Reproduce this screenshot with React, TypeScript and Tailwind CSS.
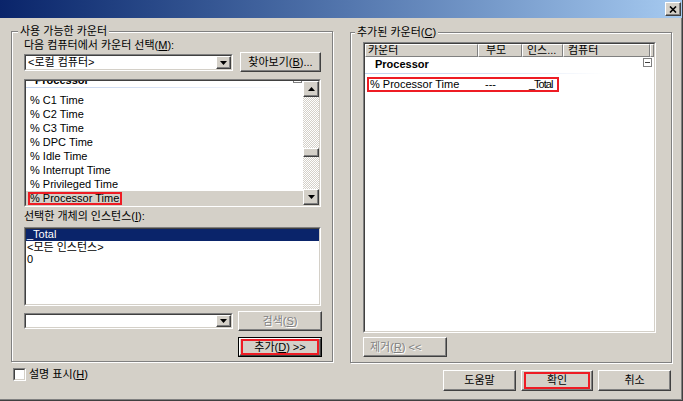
import { FC, ReactNode } from "react";

const raised =
  "border border-t-white border-l-white border-r-[#404040] border-b-[#404040] shadow-[inset_-1px_-1px_0_#808080] bg-[#d4d0c8]";

const Arrow: FC<{ up?: boolean }> = ({ up }) => (
  <svg width="7" height="4" viewBox="0 0 7 4">
    <path d={up ? "M3.5 0L7 4H0z" : "M0 0h7L3.5 4z"} fill="#000" />
  </svg>
);

const ArrowBtn: FC<{ up?: boolean; className?: string }> = ({ up, className = "" }) => (
  <div className={`flex shrink-0 items-center justify-center ${raised} ${className}`}>
    <Arrow up={up} />
  </div>
);

// two-line sunken frame, content starts 2px inside
const Sunken: FC<{ className?: string; inner?: string; children?: ReactNode }> = ({
  className = "",
  inner = "",
  children,
}) => (
  <div className={`flex border border-t-[#808080] border-l-[#808080] border-r-white border-b-white ${className}`}>
    <div className={`flex flex-1 overflow-hidden border border-t-[#404040] border-l-[#404040] border-r-[#d4d0c8] border-b-[#d4d0c8] bg-white ${inner}`}>
      {children}
    </div>
  </div>
);

const Combo: FC<{ text?: string; className?: string }> = ({ text, className = "" }) => (
  <Sunken className={className}>
    <span className="flex-1 pl-[2px] leading-[13px] whitespace-nowrap">{text}</span>
    <ArrowBtn className="w-[15px]" />
  </Sunken>
);

const Button: FC<{
  children: ReactNode;
  className?: string;
  disabled?: boolean;
  outline?: boolean;
}> = ({ children, className = "", disabled, outline }) => (
  <div className={`flex shrink-0 ${outline ? "border border-black" : ""} ${className}`}>
    <div
      className={`flex flex-1 items-center justify-center leading-[13px] whitespace-nowrap ${raised} ${
        disabled ? "text-[#808080] [text-shadow:1px_1px_0_#fff]" : ""
      }`}
    >
      {children}
    </div>
  </div>
);

const Collapse: FC<{ className?: string }> = ({ className = "" }) => (
  <div className={`flex h-[9px] w-[9px] shrink-0 items-center justify-center border border-[#808080] bg-white ${className}`}>
    <div className="h-px w-[5px] bg-[#404040]" />
  </div>
);

const HeaderCell: FC<{ className: string; children?: ReactNode }> = ({ className, children }) => (
  <div
    className={`h-full shrink-0 overflow-hidden border border-t-white border-l-white border-r-[#808080] border-b-[#808080] pl-[2px] leading-[11px] whitespace-nowrap ${className}`}
  >
    {children}
  </div>
);

const counters = [
  "% C1 Time",
  "% C2 Time",
  "% C3 Time",
  "% DPC Time",
  "% Idle Time",
  "% Interrupt Time",
  "% Privileged Time",
];

export default function App() {
  return (
    <div className="flex h-[401px] w-[683px] flex-col overflow-hidden border-r border-b border-r-[#404040] border-b-[#404040] bg-[#d4d0c8] font-['Liberation_Sans','Noto_Sans_CJK_KR',sans-serif] text-[11px] text-black shadow-[inset_-1px_-1px_0_#808080]">
      {/* title bar */}
      <div className="flex h-[18px] shrink-0 items-start justify-end bg-linear-to-r from-[#0a246a] to-[#a6caf0] pt-[2px] pr-[1px]">
        <div className={`flex h-[14px] w-[16px] items-center justify-center ${raised}`}>
          <svg width="8" height="7" viewBox="0 0 8 7">
            <path d="M1 0.5l6 6M7 0.5l-6 6" stroke="#000" strokeWidth="1.6" />
          </svg>
        </div>
      </div>

      <div className="flex gap-[17px] pt-[13px] pl-[11px]">
        {/* available counters */}
        <div className="relative flex h-[331px] w-[322px] shrink-0 flex-col border border-[#808080] pl-[12px] shadow-[inset_1px_1px_0_#fff,1px_1px_0_#fff]">
          <span className="absolute -top-[7px] left-[6px] bg-[#d4d0c8] px-[2px] leading-[13px]">
            사용 가능한 카운터
          </span>
          <div className="mt-[7px] leading-[13px]">
            다음 컴퓨터에서 카운터 선택(<u>M</u>):
          </div>
          <div className="flex h-[20px]">
            <Combo text="<로컬 컴퓨터>" className="mt-[2px] h-[17px] w-[209px]" />
            <Button className="ml-[7px] h-[20px] w-[81px]">
              찾아보기(<u>B</u>)...
            </Button>
          </div>

          <Sunken className="mt-[7px] h-[128px] w-[297px]">
            <div className="flex flex-1 flex-col overflow-hidden">
              <div className="h-[6px] shrink-0 overflow-hidden">
                <div className="-mt-[8px] flex h-[14px] items-start">
                  <span className="flex-1 pl-[9px] leading-[14px] font-bold">Processor</span>
                  <Collapse className="mt-[1px] mr-[1px]" />
                </div>
              </div>
              <div className="h-px w-[270px] shrink-0 bg-linear-to-r from-[#c3d3ee] via-[#d8e2f4] to-white" />
              <div className="mt-[5px] flex flex-col">
                {counters.map((c) => (
                  <div key={c} className="h-[14px] pl-[4px] leading-[14px] whitespace-nowrap">
                    {c}
                  </div>
                ))}
                <div className="flex h-[14px] items-center bg-[#d4d0c8] pl-[2px]">
                  <span className="h-[13px] border-2 border-[#ee1c24] pr-[1px] leading-[9px] whitespace-nowrap">
                    % Processor Time
                  </span>
                </div>
              </div>
            </div>
            <div className="flex w-[16px] shrink-0 flex-col bg-[repeating-conic-gradient(#d4d0c8_0%_25%,#ffffff_0%_50%)] bg-[length:2px_2px]">
              <ArrowBtn up className="h-[16px] w-[16px]" />
              <div className="flex-1">
                <div className={`mt-[51px] h-[9px] w-[16px] ${raised}`} />
              </div>
              <ArrowBtn className="h-[16px] w-[16px]" />
            </div>
          </Sunken>

          <div className="mt-[3px] leading-[13px]">
            선택한 개체의 인스턴스(<u>I</u>):
          </div>
          <Sunken className="mt-[4px] h-[79px] w-[297px]" inner="flex-col">
            <div className="h-[12px] bg-[#0a246a] pl-[1px] leading-[10px] text-white">_Total</div>
            <div className="h-[12px] pl-[1px] leading-[12px]">&lt;모든 인스턴스&gt;</div>
            <div className="h-[12px] pl-[1px] leading-[12px]">0</div>
          </Sunken>

          <div className="mt-[5px] flex h-[20px]">
            <Combo className="mt-[2px] h-[16px] w-[209px]" />
            <Button disabled className="ml-[5px] h-[20px] w-[84px]">
              검색(<u>S</u>)
            </Button>
          </div>
          <Button outline className="mt-[6px] ml-[214px] h-[20px] w-[84px]">
            <span className="flex h-[16px] w-[78px] items-center justify-center border-2 border-[#ee1c24]">
              추가(<u>D</u>) &gt;&gt;
            </span>
          </Button>
        </div>

        {/* added counters */}
        <div className="relative mt-[1px] flex h-[331px] w-[322px] shrink-0 flex-col border border-[#808080] pl-[12px] shadow-[inset_1px_1px_0_#fff,1px_1px_0_#fff]">
          <span className="absolute -top-[7px] left-[4px] bg-[#d4d0c8] px-[2px] leading-[13px]">
            추가된 카운터(<u>C</u>)
          </span>
          <Sunken className="mt-[9px] h-[291px] w-[293px]" inner="flex-col">
            <div className="flex h-[13px] shrink-0 bg-[#d4d0c8]">
              <HeaderCell className="w-[113px]">카운터</HeaderCell>
              <HeaderCell className="w-[44px] pl-[7px]">부모</HeaderCell>
              <HeaderCell className="w-[41px] pl-[4px]">인스...</HeaderCell>
              <HeaderCell className="w-[87px] pl-[4px]">컴퓨터</HeaderCell>
              <HeaderCell className="flex-1 shrink" />
            </div>
            <div className="flex h-[14px] items-start">
              <span className="flex-1 pl-[10px] leading-[14px] font-bold">Processor</span>
              <Collapse className="mt-[1px] mr-[2px]" />
            </div>
            <div className="mt-[2px] h-px w-[240px] bg-linear-to-r from-[#c3d3ee] via-[#d8e2f4] to-white" />
            <div className="mt-[3px] ml-[2px] flex h-[15px] w-[192px] items-center overflow-hidden border-2 border-[#ee1c24] leading-[11px] whitespace-nowrap">
              <span className="w-[116px] shrink-0 pl-[1px]">% Processor Time</span>
              <span className="w-[44px] shrink-0">---</span>
              <span className="tracking-[-1px]">_Total</span>
            </div>
          </Sunken>
          <Button disabled className="mt-[4px] h-[20px] w-[84px]">
            <span className="mr-auto pl-[6px]">
              제거(<u>R</u>) &lt;&lt;
            </span>
          </Button>
        </div>
      </div>

      {/* bottom row */}
      <div className="mt-[7px] flex items-start pr-[11px] pl-[13px]">
        <div className="-mt-[2px] flex h-[13px] items-center">
          <Sunken className="h-[13px] w-[13px]" />
          <span className="ml-[3px] leading-[13px]">
            설명 표시(<u>H</u>)
          </span>
        </div>
        <div className="ml-auto flex gap-[5px]">
          <Button className="h-[21px] w-[73px]">도움말</Button>
          <Button className="h-[21px] w-[72px]">
            <span className="flex h-[17px] w-[66px] items-center justify-center border-2 border-[#ee1c24]">확인</span>
          </Button>
          <Button className="h-[21px] w-[73px]">취소</Button>
        </div>
      </div>
    </div>
  );
}
